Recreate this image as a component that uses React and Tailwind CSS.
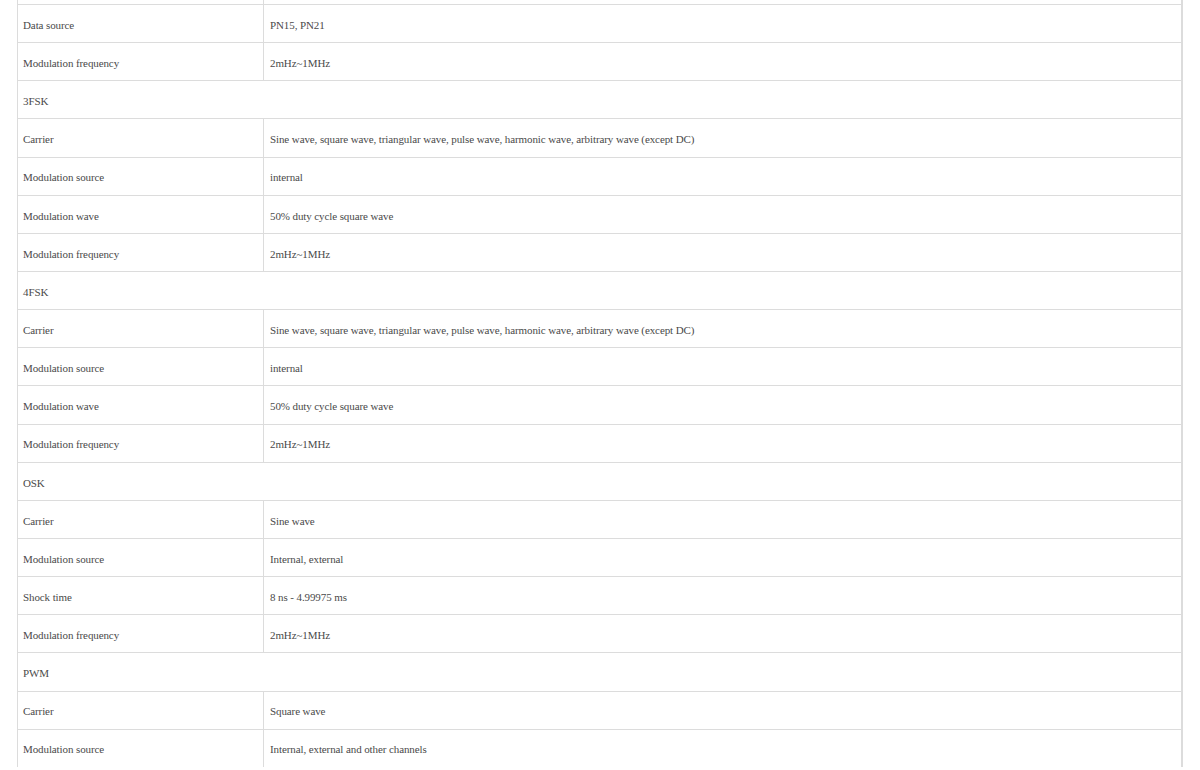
import React from "react";

const rows = [
  ["Data source", "PN15, PN21"],
  ["Modulation frequency", "2mHz~1MHz"],
  ["3FSK"],
  ["Carrier", "Sine wave, square wave, triangular wave, pulse wave, harmonic wave, arbitrary wave (except DC)"],
  ["Modulation source", "internal"],
  ["Modulation wave", "50% duty cycle square wave"],
  ["Modulation frequency", "2mHz~1MHz"],
  ["4FSK"],
  ["Carrier", "Sine wave, square wave, triangular wave, pulse wave, harmonic wave, arbitrary wave (except DC)"],
  ["Modulation source", "internal"],
  ["Modulation wave", "50% duty cycle square wave"],
  ["Modulation frequency", "2mHz~1MHz"],
  ["OSK"],
  ["Carrier", "Sine wave"],
  ["Modulation source", "Internal, external"],
  ["Shock time", "8 ns - 4.99975 ms"],
  ["Modulation frequency", "2mHz~1MHz"],
  ["PWM"],
  ["Carrier", "Square wave"],
  ["Modulation source", "Internal, external and other channels"],
];

const Row = ({ cells }) => (
  <div className="flex h-[38.15px] border-t border-[#dcdcdc]">
    {cells.length === 1 ? (
      <div className="flex items-center pl-[5px] pt-[3px]">{cells[0]}</div>
    ) : (
      <>
        <div className="flex items-center pl-[5px] pt-[3px] w-[246px] border-r border-[#dcdcdc]">{cells[0]}</div>
        <div className="flex items-center pl-[6px] pt-[3px] flex-1">{cells[1]}</div>
      </>
    )}
  </div>
);

export default function App() {
  return (
    <div className="w-[1200px] h-[770px] overflow-hidden bg-white">
      <div
        className="ml-[17px] w-[1166px] border-l border-r-2 border-[#dcdcdc] text-[11px] tracking-[-0.1px] text-[#4a4a4a]"
        style={{ fontFamily: '"Liberation Serif", "Times New Roman", serif' }}
      >
        <div className="flex h-[4px]">
          <div className="w-[246px] border-r border-[#dcdcdc]" />
        </div>
        {rows.map((r, i) => (
          <Row key={i} cells={r} />
        ))}
      </div>
    </div>
  );
}
